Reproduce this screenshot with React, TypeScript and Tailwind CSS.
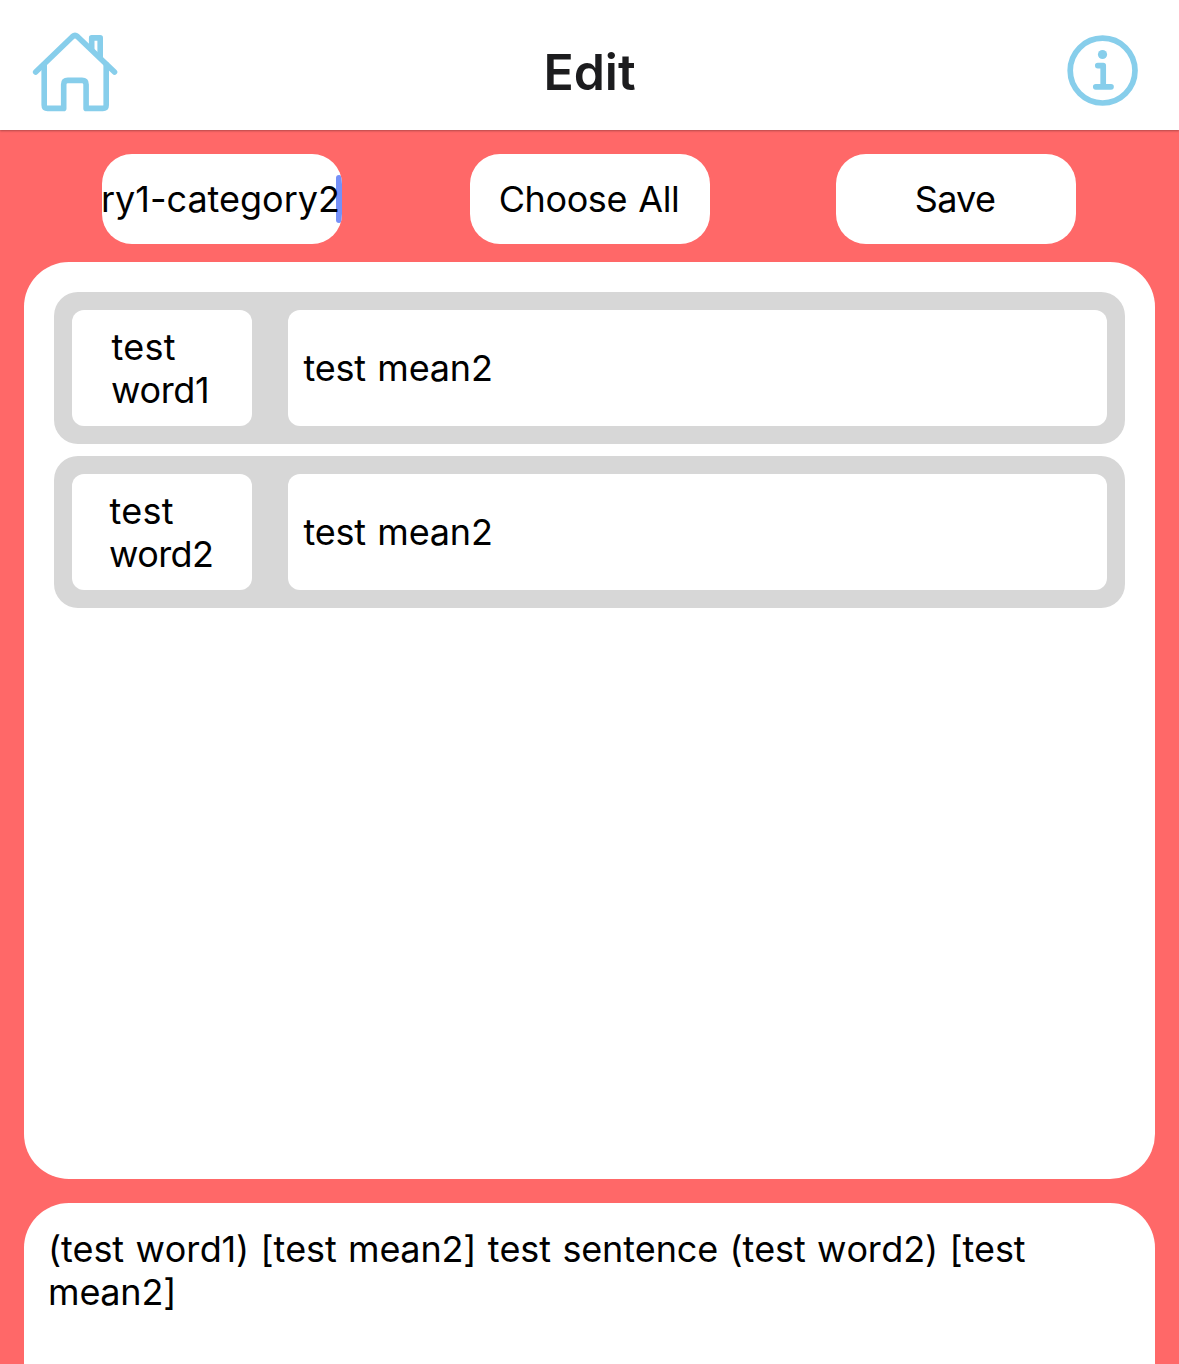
import React from 'react';

const words = [
  { word: 'test', second: 'word1', mean: 'test mean2', pad: 'pl-[39.5px]', tracking: 'tracking-[-0.35px]' },
  { word: 'test', second: 'word2', mean: 'test mean2', pad: 'pl-[37.5px]', tracking: 'tracking-[-0.6px]' },
];

function HomeIcon() {
  return (
    <svg width="88" height="84" viewBox="31 30 88 84" fill="none" stroke="#87ceeb" strokeWidth="5.6" strokeLinecap="round" strokeLinejoin="round">
      <path d="M35.700 72L72.600 36.500Q75 34.500 77.400 36.500L114.500 72" />
      <path d="M44.200 64.500V105Q44.200 108.400 47.600 108.400H63.700V84.500Q63.700 80.400 67.800 80.400H82Q86.100 80.400 86.100 84.500V108.400H102.800Q106.200 108.400 106.200 105V64.500" />
      <path d="M91.700 49V37.900H100.200V57" />
    </svg>
  );
}

function InfoIcon() {
  return (
    <svg width="72" height="72" viewBox="1067 35 72 72" fill="none" stroke="#87ceeb" strokeWidth="5.7" strokeLinecap="round" strokeLinejoin="round">
      <circle cx="1102.600" cy="70.600" r="32.400" />
      <circle cx="1102.500" cy="54.500" r="4.600" fill="#87ceeb" stroke="none" />
      <path d="M1097.800 65.600H1103.200V86.800M1095.800 86.800H1111" />
    </svg>
  );
}

export default function App() {
  return (
    <div className="flex h-[1364px] w-[1179px] flex-col overflow-hidden bg-[#ff6868] font-['Inter','Liberation_Sans',sans-serif] text-[36px] leading-[43px] text-black">
      <header className="flex h-[130px] shrink-0 justify-between bg-white pr-10 pl-[31px] shadow-[0_1px_2px_rgba(0,0,0,0.3)]">
        <div className="w-[88px] pt-[30px]"><HomeIcon /></div>
        <h1 className="-ml-[7px] pt-[42px] text-[50px] leading-[60px] font-semibold text-[#1c1c1e]">Edit</h1>
        <div className="pt-[35px]"><InfoIcon /></div>
      </header>
      <div className="mt-6 flex h-[90px] shrink-0 pl-[102px]">
        <div className="relative flex w-60 items-center justify-end overflow-hidden rounded-[30px] bg-white pt-px pr-[2px] whitespace-nowrap">
          <span className="absolute top-[21px] right-0 h-12 w-1.5 rounded-[3px] bg-[#7590f8]" />
          <span className="relative">ry1-category2</span>
        </div>
        <button className="ml-32 w-60 rounded-[30px] bg-white pt-px pr-[2px] tracking-[-0.4px] [word-spacing:1.5px]">Choose All</button>
        <button className="ml-[126px] w-60 rounded-[30px] bg-white pt-px pr-[2px] tracking-[-0.7px]">Save</button>
      </div>
      <main className="mx-6 mt-[18px] flex h-[917px] shrink-0 flex-col gap-3 rounded-[45px] bg-white p-[30px]">
        {words.map((w) => (
          <div key={w.second} className="flex h-[152px] shrink-0 gap-9 rounded-[24px] bg-[#d7d7d7] p-[18px]">
            <div className={`flex w-[180px] flex-col justify-center rounded-xl bg-white pt-[2px] ${w.pad}`}>
              <span className="tracking-[0.25px]">{w.word}</span>
              <span className={`-ml-[0.5px] ${w.tracking}`}>{w.second}</span>
            </div>
            <div className="flex flex-1 items-center rounded-xl bg-white pt-px pl-[15.5px] tracking-[-0.2px] [word-spacing:1.5px]">{w.mean}</div>
          </div>
        ))}
      </main>
      <section className="mx-6 mt-6 h-[240px] shrink-0 rounded-[45px] bg-white px-6 pt-[25px]">
        <p className="tracking-[-0.15px] [font-kerning:none] [word-spacing:1.6px]">
          (test word1) [test mean2] test sentence (test word2) [test mean2]
        </p>
      </section>
    </div>
  );
}
